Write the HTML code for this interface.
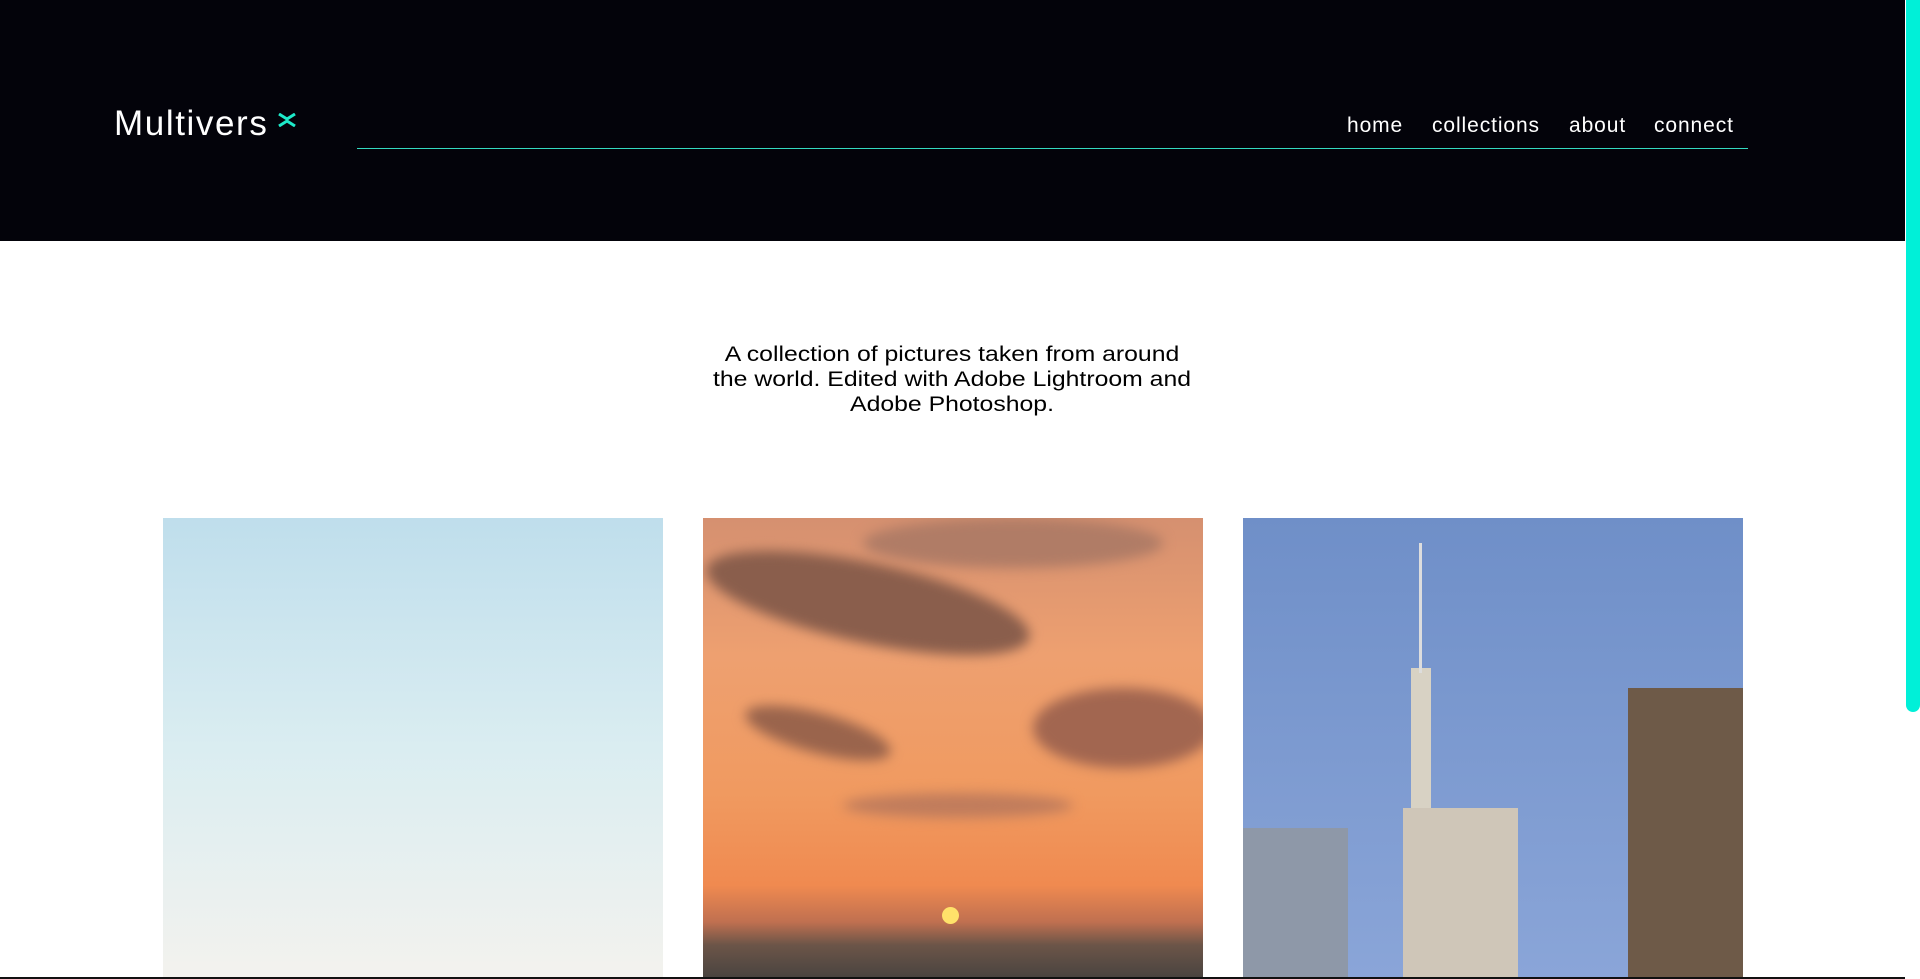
<!DOCTYPE html>
<html><head><meta charset="utf-8"><style>
*{margin:0;padding:0;box-sizing:border-box}
html,body{width:1920px;height:979px;overflow:hidden;background:#fff;font-family:"Liberation Sans",sans-serif}
.hdr{position:absolute;left:0;top:0;width:1905px;height:241px;background:#03030a}
.logo{position:absolute;left:114px;top:104px;color:#fff;font-size:35px;letter-spacing:1.6px}
.x{position:absolute;left:277px;top:113px;width:20px;height:14px}
.line{position:absolute;left:357px;top:148px;width:1391px;height:1px;background:#33d9c0}
.nav{position:absolute;top:114px;color:#fff;font-size:21px;letter-spacing:0.9px}
.sb{position:absolute;left:1905px;top:0;width:15px;height:979px;background:#fff}
.sb div{position:absolute;left:1px;top:0;width:14px;height:712px;background:#00f0d8;border-radius:0 0 7px 7px}
.txt{position:absolute;left:552px;top:342px;width:800px;text-align:center;font-size:21px;line-height:25px;color:#000;transform:scaleX(1.18)}
.img{position:absolute;top:518px;width:500px;height:459px;overflow:hidden}
.bot{position:absolute;left:0;top:977px;width:1905px;height:2px;background:#111}
.c{position:absolute;border-radius:50%;filter:blur(6px)}
</style></head><body>
<div class="hdr">
<div class="logo">Multivers</div>
<svg class="x" viewBox="0 0 20 14"><path d="M2 1 L10 6 L18 1 M2 13 L10 8 L18 13" stroke="#1de9c9" stroke-width="3" fill="none"/></svg>
<div class="line"></div>
<div class="nav" style="left:1347px">home</div>
<div class="nav" style="left:1432px">collections</div>
<div class="nav" style="left:1569px">about</div>
<div class="nav" style="left:1654px">connect</div>
</div>
<div class="sb"><div></div></div>
<div class="txt">A collection of pictures taken from around<br>the world. Edited with Adobe Lightroom and<br>Adobe Photoshop.</div>
<div class="img" style="left:163px;background:linear-gradient(#bfdeec,#daedf1 50%,#f3f2ee)"></div>
<div class="img" style="left:703px;background:linear-gradient(#d59070,#eea070 30%,#f09a60 60%,#f08a50 80%,#c07050 88%,#6c5548 93%,#4a4440)">
<div class="c" style="left:0;top:45px;width:330px;height:80px;background:#8a5e4c;transform:rotate(12deg)"></div>
<div class="c" style="left:40px;top:195px;width:150px;height:40px;background:#9a644c;transform:rotate(15deg)"></div>
<div class="c" style="left:330px;top:170px;width:180px;height:80px;background:#a26650"></div>
<div class="c" style="left:140px;top:275px;width:230px;height:25px;background:#c07c5c"></div>
<div class="c" style="left:160px;top:0;width:300px;height:50px;background:#b07c66"></div>
<div style="position:absolute;left:239px;top:389px;width:17px;height:17px;border-radius:50%;background:#ffe26a"></div>
</div>
<div class="img" style="left:1243px;background:linear-gradient(#6f8fc8,#8aa5d8)">
<div style="position:absolute;left:168px;top:150px;width:20px;height:300px;background:#d8d2c4"></div>
<div style="position:absolute;left:176px;top:25px;width:3px;height:130px;background:#ddd"></div>
<div style="position:absolute;left:160px;top:290px;width:115px;height:170px;background:#cfc6b8"></div>
<div style="position:absolute;left:0;top:310px;width:105px;height:150px;background:#8e98a8"></div>
<div style="position:absolute;left:385px;top:170px;width:115px;height:290px;background:#6e5a48"></div>
</div>
<div class="bot"></div>
</body></html>
